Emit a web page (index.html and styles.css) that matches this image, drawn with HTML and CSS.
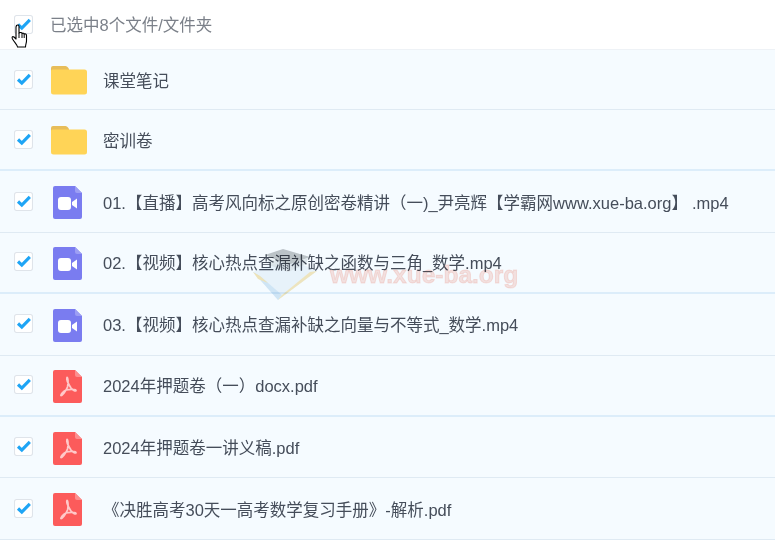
FILE: index.html
```html
<!DOCTYPE html>
<html lang="zh-CN">
<head>
<meta charset="utf-8">
<title>已选中8个文件/文件夹</title>
<link rel="stylesheet" href="styles.css">
</head>
<body>
<svg class="defs" width="0" height="0" aria-hidden="true">
  <symbol id="check" viewBox="0 0 18 18">
    <rect x="0.5" y="0.5" width="17" height="17" rx="2" fill="#fff" stroke="#dfe4ea"/>
    <path d="M3.8 9 L7.4 12.4 L15 4.600" fill="none" stroke="#1fa5f5" stroke-width="3" stroke-linejoin="miter"/>
  </symbol>
  <symbol id="folder" viewBox="0 0 36 30">
    <path d="M0 3 a2 2 0 0 1 2-2 h12 a3 3 0 0 1 3 1.6 l1 1.4 V12 H0z" fill="#e7bd5a"/>
    <path d="M0 6 a1.500 1.500 0 0 1 1.500-1.500 H33.500 a2.500 2.500 0 0 1 2.500 2.500 V27 a2.500 2.500 0 0 1-2.500 2.500 H2.500 a2.500 2.500 0 0 1-2.500-2.500z" fill="#ffd457"/>
  </symbol>
  <symbol id="video" viewBox="0 0 29 33">
    <path d="M2 0 H22 L29 7 V31 a2 2 0 0 1-2 2 H2 a2 2 0 0 1-2-2 V2 a2 2 0 0 1 2-2z" fill="#7a7cf0"/>
    <path d="M22 0 L29 7 H24 a2 2 0 0 1-2-2z" fill="#9c9ef4"/>
    <rect x="5" y="11" width="13" height="13" rx="3" fill="#fff"/>
    <path d="M19 16 L24 12.500 V22.500 L19 19z" fill="#fff"/>
  </symbol>
  <symbol id="pdf" viewBox="0 0 29 33">
    <path d="M2 0 H22 L29 7 V31 a2 2 0 0 1-2 2 H2 a2 2 0 0 1-2-2 V2 a2 2 0 0 1 2-2z" fill="#fc5b5b"/>
    <path d="M22 0 L29 7 H24 a2 2 0 0 1-2-2z" fill="#fd8e8e"/>
    <path d="M14 7.500 C13 10 16 15 18 18 C20 20.500 23 21.500 23 20.500 C23 19 17 19 13 20 C10 21 7.500 25 8 25.500 C9 26 13 21 14.500 17 C15.500 14 15 7.500 14 7.500z" fill="none" stroke="#ffc9c9" stroke-width="1.800" stroke-linejoin="round"/>
  </symbol>
</svg>

<div class="list">
  <div class="header">
    <svg class="check"><use href="#check"/></svg>
    <span class="header-text">已选中8个文件/文件夹</span>
  </div>
  <div class="row row-first">
    <svg class="check"><use href="#check"/></svg>
    <svg class="icon icon-folder"><use href="#folder"/></svg>
    <span class="name">课堂笔记</span>
  </div>
  <div class="row row-strong">
    <svg class="check"><use href="#check"/></svg>
    <svg class="icon icon-folder"><use href="#folder"/></svg>
    <span class="name">密训卷</span>
  </div>
  <div class="row">
    <svg class="check"><use href="#check"/></svg>
    <svg class="icon icon-file"><use href="#video"/></svg>
    <span class="name">01.【直播】高考风向标之原创密卷精讲（一)_尹亮辉【学霸网www.xue-ba.org】<span class="ext-gap">.mp4</span></span>
  </div>
  <div class="row row-strong">
    <svg class="check"><use href="#check"/></svg>
    <svg class="icon icon-file"><use href="#video"/></svg>
    <span class="name">02.【视频】核心热点查漏补缺之函数与三角_数学.mp4</span>
  </div>
  <div class="row">
    <svg class="check"><use href="#check"/></svg>
    <svg class="icon icon-file"><use href="#video"/></svg>
    <span class="name">03.【视频】核心热点查漏补缺之向量与不等式_数学.mp4</span>
  </div>
  <div class="row row-strong">
    <svg class="check"><use href="#check"/></svg>
    <svg class="icon icon-file"><use href="#pdf"/></svg>
    <span class="name">2024年押题卷（一）docx.pdf</span>
  </div>
  <div class="row">
    <svg class="check"><use href="#check"/></svg>
    <svg class="icon icon-file"><use href="#pdf"/></svg>
    <span class="name">2024年押题卷一讲义稿.pdf</span>
  </div>
  <div class="row">
    <svg class="check"><use href="#check"/></svg>
    <svg class="icon icon-file"><use href="#pdf"/></svg>
    <span class="name">《决胜高考30天一高考数学复习手册》-解析.pdf</span>
  </div>
</div>

<div class="watermark">
  <svg class="wm-logo" viewBox="0 0 70 56">
    <path d="M3 27 L28 55 L67 26 L38 13z" fill="#eef4f9"/>
    <path d="M3 27 L10 31 L32 50 L28 55z" fill="#cfe4f3"/>
    <path d="M3 27 L10 31 L18 38 L8 34z" fill="#f6e2a8"/>
    <path d="M32 50 L60 27 L67 26 L28 55z" fill="#f6e3ae"/>
    <path d="M15 10 L33 4 L60 12 L38 20z" fill="#b4b8ba"/>
    <path d="M17 13 L38 20 L58 13 L56 19 L38 27 L19 20z" fill="#dadee0" opacity="0.8"/>
  </svg>
  <span class="wm-text">www.xue-ba.org</span>
</div>

<svg class="cursor" viewBox="0 0 17 24">
  <path d="M5.500 1.500 C6.500 .5 8 1 8 2.500 V9 L9.500 8.500 C10.500 8.300 11 8.800 11 9.500 C12 8.800 13 9.200 13.200 10 C14.200 9.500 15.500 10 15.500 11.500 V17 C15.500 19 14.500 20.500 14.500 23 H6.500 C6.500 21 4 19 1.500 15 C.5 13 1.500 12 3 13 L5 15 V3z" fill="#fff" stroke="#000" stroke-width="1.100" stroke-linejoin="round"/>
  <path d="M8 9 V14 M11 9.500 V14 M13.200 10 V14" stroke="#000" stroke-width="1" fill="none"/>
</svg>
</body>
</html>
```
FILE: styles.css
```css
* { box-sizing: border-box; }

html, body {
  margin: 0;
  padding: 0;
  width: 775px;
  height: 550px;
  overflow: hidden;
  background: #fff;
  font-family: "Liberation Sans", "Noto Sans CJK SC", sans-serif;
  color: #454d5a;
}

.defs { position: absolute; }

.list { display: flex; flex-direction: column; }

.header {
  height: 50px;
  display: flex;
  align-items: center;
  padding-left: 14px;
  background: #fff;
  border-bottom: 1px solid #eef2f6;
}

.header-text {
  margin-left: 17px;
  margin-bottom: 2px;
  font-size: 16.5px;
  color: #7b8089;
}

.row {
  height: 61.4px;
  display: flex;
  align-items: center;
  padding-left: 14px;
  background: #f5fbff;
  border-bottom: 1px solid #dfeaf3;
}

.row-first { height: 60px; }

.row-strong { border-bottom: 2px solid #dcedfa; }

.check {
  width: 19px;
  height: 19px;
  flex: none;
}

.row .check { margin-bottom: 1px; }

.icon { flex: none; }

.icon-folder {
  width: 36px;
  height: 30px;
  margin: 0 16px 0 18px;
}

.icon-file {
  width: 29px;
  height: 33px;
  margin: 2px 21px 0 20px;
}

.name {
  font-size: 16.5px;
  white-space: nowrap;
}

.ext-gap { margin-left: 4px; }

.watermark {
  position: absolute;
  left: 250px;
  top: 245px;
  display: flex;
  align-items: center;
  pointer-events: none;
  mix-blend-mode: multiply;
}

.wm-logo { width: 70px; height: 56px; opacity: 0.8; }

.wm-text {
  margin-left: 10px;
  margin-top: 3px;
  font-family: "Liberation Sans", sans-serif;
  font-weight: 700;
  font-size: 24.5px;
  color: rgba(240, 130, 110, 0.22);
  -webkit-text-stroke: 1px rgba(240, 130, 110, 0.2);
  filter: blur(0.6px);
}

.cursor {
  position: absolute;
  left: 11px;
  top: 24px;
  width: 17px;
  height: 24px;
}
```
